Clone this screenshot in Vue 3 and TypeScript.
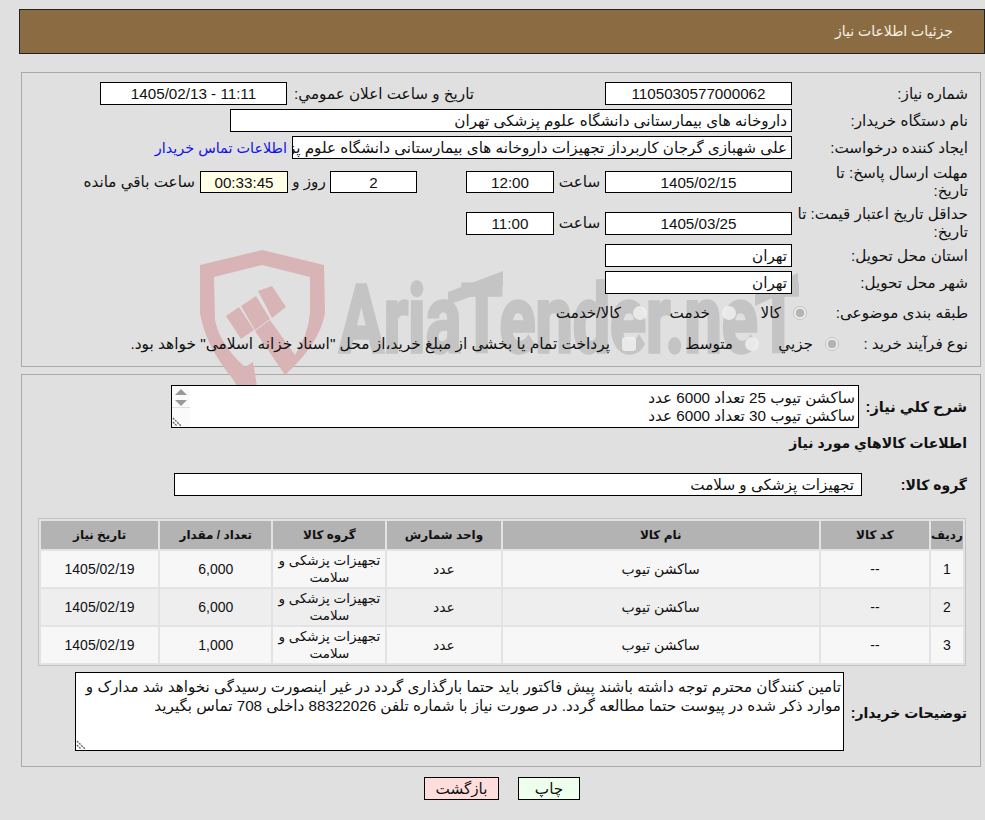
<script setup lang="ts">
interface Item { n: number; qty: string }
const items: Item[] = [
  { n: 1, qty: '6,000' },
  { n: 2, qty: '6,000' },
  { n: 3, qty: '1,000' }
]
</script>

<template>
  <div class="page" dir="rtl">
    <div class="head">جزئیات اطلاعات نیاز</div>

    <svg class="wm" width="640" height="160" viewBox="190 240 640 160" aria-hidden="true">
      <g fill="#d9b4b6">
        <path d="M200 265 L262 250 L324 265 L325 313 Q320 343 285 375 L255 331 L270 320 L295 355 Q308 335 310 313 L310 277 L262 265 L214 277 L215 320 Q220 345 245 367 L253 362 L257 386 L237 386 L232 378 Q205 345 200 313 Z" />
        <path d="M226 316 L239 307 L254 330 L241 339 Z" />
        <path d="M241 306 L256 296 L270 319 L255 330 Z" />
        <path d="M258 291 L272 286 L286 307 L272 318 Z" />
      </g>
      <g class="wm-grey">
        <text x="339" y="352" class="wm-text" textLength="460" lengthAdjust="spacingAndGlyphs">AriaTender.neT</text>
        <path d="M448 292 L503 271 L503 285 L448 305 Z" />
        <path d="M755 293 L798 273 L798 286 L755 306 Z" />
      </g>
    </svg>

    <section class="panel first">
      <div class="row">
        <div class="label">شماره نیاز:</div>
        <div class="field w187 center">1105030577000062</div>
        <div class="label far">تاریخ و ساعت اعلان عمومي:</div>
        <div class="field w188 center">11:11 - 1405/02/13</div>
      </div>
      <div class="row">
        <div class="label">نام دستگاه خریدار:</div>
        <div class="field w562">داروخانه های بیمارستانی دانشگاه علوم پزشکی تهران</div>
      </div>
      <div class="row">
        <div class="label">ایجاد کننده درخواست:</div>
        <div class="field w500">علی شهبازی گرجان کاربرداز تجهیزات داروخانه های بیمارستانی دانشگاه علوم پزشکی تهران</div>
        <a class="link">اطلاعات تماس خریدار</a>
      </div>
      <div class="row tall">
        <div class="label">مهلت ارسال پاسخ: تا<br />تاریخ:</div>
        <div class="field w187 short center">1405/02/15</div>
        <div class="word w51">ساعت</div>
        <div class="field w88 short center">12:00</div>
        <div class="field w87 short center mr50">2</div>
        <div class="word w42">روز و</div>
        <div class="field w88 short center timer">00:33:45</div>
        <div class="word left5">ساعت باقي مانده</div>
      </div>
      <div class="row tall">
        <div class="label">حداقل تاریخ اعتبار قیمت: تا<br />تاریخ:</div>
        <div class="field w187 center">1405/03/25</div>
        <div class="word w51">ساعت</div>
        <div class="field w88 center">11:00</div>
      </div>
      <div class="row gap3">
        <div class="label">استان محل تحویل:</div>
        <div class="field w187">تهران</div>
      </div>
      <div class="row">
        <div class="label">شهر محل تحویل:</div>
        <div class="field w187">تهران</div>
      </div>
      <div class="row radios r1">
        <div class="label l161">طبقه بندی موضوعی:</div>
        <div class="opt w71"><span class="radio on"></span>کالا</div>
        <div class="opt w89"><span class="radio"></span>خدمت</div>
        <div class="opt"><span class="radio"></span>کالا/خدمت</div>
      </div>
      <div class="row radios r2">
        <div class="label l129">نوع فرآیند خرید :</div>
        <div class="opt w80"><span class="radio on"></span>جزیي</div>
        <div class="opt w123"><span class="radio"></span>متوسط</div>
        <div class="opt long"><span class="radio sq"></span>پرداخت تمام یا بخشی از مبلغ خرید،از محل "اسناد خزانه اسلامی" خواهد بود.</div>
      </div>
    </section>

    <section class="panel second">
      <div class="desc-row">
        <div class="blabel l102">شرح کلي نیاز:</div>
        <div class="area small">
          <div class="area-text">ساکشن تیوب 25 تعداد 6000 عدد<br />ساکشن تیوب 30 تعداد 6000 عدد</div>
          <div class="scroll">
            <div class="arrows">
              <span class="tri up"></span>
              <span class="tri down"></span>
            </div>
            <svg class="grip" width="12" height="12" viewBox="0 0 12 12">
              <path d="M1 3 L9 11 M1 7 L5 11" stroke="#666" stroke-width="1.4" stroke-dasharray="2 1" fill="none" />
            </svg>
          </div>
        </div>
      </div>
      <div class="heading">اطلاعات کالاهاي مورد نیاز</div>
      <div class="group-row">
        <div class="blabel l105">گروه کالا:</div>
        <div class="field w688 pad6">تجهیزات پزشکی و سلامت</div>
      </div>

      <div class="table-wrap">
        <table>
          <colgroup>
            <col class="c1" /><col class="c2" /><col class="c3" /><col class="c4" />
            <col class="c5" /><col class="c6" /><col class="c7" />
          </colgroup>
          <thead>
            <tr>
              <th>ردیف</th><th>کد کالا</th><th>نام کالا</th><th>واحد شمارش</th>
              <th>گروه کالا</th><th>تعداد / مقدار</th><th>تاریخ نیاز</th>
            </tr>
          </thead>
          <tbody>
            <tr v-for="it in items" :key="it.n">
              <td>{{ it.n }}</td>
              <td>--</td>
              <td>ساکشن تیوب</td>
              <td>عدد</td>
              <td class="wrap">تجهیزات پزشکی و سلامت</td>
              <td>{{ it.qty }}</td>
              <td>1405/02/19</td>
            </tr>
          </tbody>
        </table>
      </div>

      <div class="notes-row">
        <div class="blabel l123">توضیحات خریدار:</div>
        <div class="area notes">
          تامین کنندگان محترم توجه داشته باشند پیش فاکتور باید حتما بارگذاری گردد در غیر اینصورت رسیدگی نخواهد شد مدارک و موارد ذکر شده در پیوست حتما مطالعه گردد. در صورت نیاز با شماره تلفن 88322026 داخلی 708 تماس بگیرید
          <svg class="grip-notes" width="12" height="12" viewBox="0 0 12 12">
            <path d="M1 3 L9 11 M1 7 L5 11" stroke="#666" stroke-width="1.4" stroke-dasharray="2 1" fill="none" />
          </svg>
        </div>
      </div>
    </section>

    <div class="actions">
      <button class="btn print" type="button">چاپ</button>
      <button class="btn back" type="button">بازگشت</button>
    </div>
  </div>
</template>

<style>
html, body { margin: 0; background: #e0e0e0; }
</style>

<style scoped>
.page {
  position: relative;
  width: 985px;
  height: 820px;
  box-sizing: border-box;
  padding-top: 9px;
  background: #e0e0e0;
  color: #111;
  font-family: "Liberation Sans", "DejaVu Sans", sans-serif;
  font-size: 15.2px;
  overflow: hidden;
}
.head {
  box-sizing: border-box;
  width: 966px;
  height: 45px;
  margin-right: 0;
  margin-left: 19px;
  padding-right: 31px;
  border: 1px solid #222;
  background: #8b6c42;
  color: #f6f1e4;
  line-height: 43px;
  font-size: 14px;
}
.wm { position: absolute; left: 190px; top: 240px; z-index: 1; direction: ltr; }
.wm-grey { fill: #c4c4c4; stroke: none; }
.wm-text { font-family: Roboto, sans-serif; font-weight: 700; font-size: 94px; stroke: #c4c4c4; stroke-width: 3.5px; direction: ltr; unicode-bidi: isolate; }
.panel {
  box-sizing: border-box;
  width: 960px;
  margin-right: 4px;
  border: 1px solid #aaa;
  background: #e0e0e0;
}
.panel > * { position: relative; z-index: 2; }
.first { height: 295px; margin-top: 18px; padding: 9px 12px 0 0; }
.second { height: 393px; margin-top: 7px; padding: 0 13px 0 0; }

.row { display: flex; align-items: center; min-height: 23px; margin-bottom: 4px; }
.tall { height: 36px; margin-top: 5px; margin-bottom: 0; }
.gap3 { margin-top: 3px; }
.label { width: 176px; flex: none; line-height: 18px; }
.far { width: 318px; padding-right: 131px; box-sizing: border-box; }
.l161 { width: 161px; }
.l129 { width: 129px; }
.field {
  box-sizing: border-box;
  flex: none;
  height: 23px;
  padding: 0 4px;
  border: 1px solid #000;
  background: #fff;
  line-height: 21px;
  white-space: nowrap;
  overflow: hidden;
}
.short { height: 22px; }
.center { text-align: center; }
.w187 { width: 187px; }
.w188 { width: 187px; }
.w562 { width: 562px; }
.w500 { width: 500px; }
.w88 { width: 88px; }
.w87 { width: 87px; }
.w688 { width: 688px; }
.pad6 { padding-right: 7px; }
.mr50 { margin-right: 49px; }
.word { flex: none; text-align: center; }
.w51 { width: 51px; }
.w42 { width: 42px; }
.left5 { margin-right: 5px; }
.timer { background: #ffffe8; }
.link { margin-right: 5px; color: #1010f0; white-space: nowrap; font-size: 14.4px; }
.radios { height: 22px; margin-bottom: 0; }
.r1 { margin-top: 7px; }
.r2 { margin-top: 8px; }
.opt { display: flex; align-items: center; flex: none; white-space: nowrap; }
.long { font-size: 15.4px; }
.w71 { width: 71px; }
.w89 { width: 89px; }
.w80 { width: 80px; }
.w123 { width: 123px; }
.radio {
  box-sizing: border-box;
  width: 14px;
  height: 14px;
  flex: none;
  margin-left: 12px;
  border-radius: 50%;
  background: rgba(240, 240, 240, 0.85);
}
.radio.on {
  border: 1px solid #c4c4c4;
  background: radial-gradient(circle, #b4b4b4 0 4px, #ececec 4.6px);
}
.radio.sq { border-radius: 3px; }

.desc-row { display: flex; align-items: center; padding-top: 10px; }
.blabel { flex: none; font-weight: 700; font-size: 14px; }
.l102 { width: 108px; font-size: 14.6px; }
.l105 { width: 105px; }
.l123 { width: 123px; padding-top: 3px; }
.area {
  box-sizing: border-box;
  border: 1px solid #000;
  background: #fff;
}
.small { display: flex; width: 688px; height: 43px; }
.area-text { flex: 1; padding: 3px 3px 0 0; line-height: 18px; }
.scroll {
  position: relative;
  width: 18px;
  flex: none;
  background: #fafafa;
}
.arrows {
  display: flex;
  flex-direction: column;
  align-items: center;
  gap: 5px;
  height: 22px;
  padding-top: 3px;
  box-sizing: border-box;
  border-bottom: 1px solid #ddd;
}
.tri { width: 0; height: 0; border-left: 6px solid transparent; border-right: 6px solid transparent; }
.up { border-bottom: 6px solid #999; }
.down { border-top: 6px solid #999; }
.grip { position: absolute; left: 0; bottom: 0; }
.heading { margin-top: 6px; font-weight: 700; font-size: 14px; line-height: 18px; padding-bottom: 0; }
.group-row { display: flex; align-items: center; margin-top: 21px; }

.table-wrap { margin: 22px 1px 0 16px; border: 1px solid #c4c4c4; background: #e3e3e3; }
table { width: 100%; border-collapse: separate; border-spacing: 2px; table-layout: fixed; font-size: 14px; }
.c1 { width: 32px; } .c2 { width: 108px; } .c3 { width: 316px; } .c4 { width: 113px; }
.c5 { width: 112px; } .c6 { width: 111px; } .c7 { width: 117px; }
th { height: 28px; padding: 0; background: #b3b3b3; font-weight: 700; font-size: 12px; }
td { height: 36px; padding: 0; background: #f7f7f7; text-align: center; line-height: 17px; }
td.wrap { font-size: 13.5px; }
tbody tr:nth-child(even) td { background: #eeeeee; }

.notes-row { display: flex; align-items: center; margin-top: 6px; }
.notes {
  position: relative;
  width: 769px;
  height: 79px;
  padding: 4px 2px 0 2px;
  line-height: 19px;
}
.grip-notes { position: absolute; left: 0; bottom: 0; }

.actions { display: flex; justify-content: center; gap: 19px; margin-top: 10px; padding-left: 19px; width: 985px; box-sizing: border-box; }
.btn {
  box-sizing: border-box;
  height: 23px;
  padding: 0;
  border: 1px solid #000;
  font-family: inherit;
  font-size: 15.2px;
  color: #111;
}
.print { width: 62px; background: #eeffee; }
.back { width: 75px; background: #ffdddd; }
</style>
